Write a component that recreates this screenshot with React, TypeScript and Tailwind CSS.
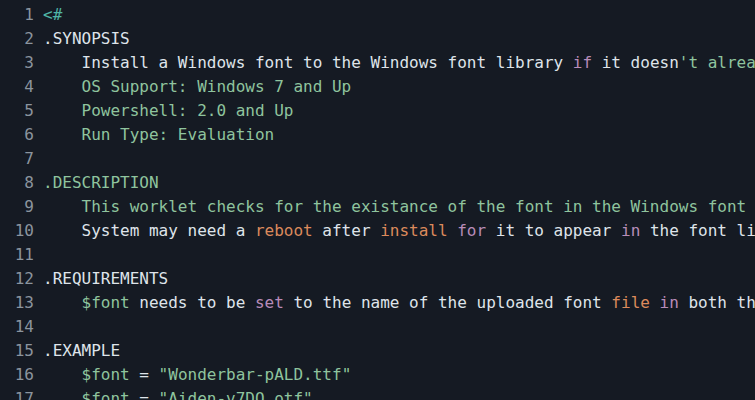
type Tok = [string, string?];

const W = "text-[#dfe4ea]";
const G = "text-[#8fc49e]";
const P = "text-[#b88cb9]";
const O = "text-[#dc8a5c]";
const T = "text-[#4fb5a6]";

const lines: Tok[][] = [
  [["<#", T]],
  [[".SYNOPSIS", W]],
  [
    ["    Install a Windows font to the Windows font library ", W],
    ["if", P],
    [" it doesn", W],
    ["'t already exist.", G],
  ],
  [["    OS Support: Windows 7 and Up", G]],
  [["    Powershell: 2.0 and Up", G]],
  [["    Run Type: Evaluation", G]],
  [],
  [[".DESCRIPTION", G]],
  [["    This worklet checks for the existance of the font in the Windows font library.", G]],
  [
    ["    System may need a ", W],
    ["reboot", O],
    [" after ", W],
    ["install", O],
    [" ", W],
    ["for", P],
    [" it to appear ", W],
    ["in", P],
    [" the font list.", W],
  ],
  [],
  [[".REQUIREMENTS", W]],
  [
    ["    ", W],
    ["$font", G],
    [" needs to be ", W],
    ["set", P],
    [" to the name of the uploaded font ", W],
    ["file", O],
    [" ", W],
    ["in", P],
    [" both the worklet and the font.", W],
  ],
  [],
  [[".EXAMPLE", W]],
  [
    ["    ", W],
    ["$font", G],
    [" = ", W],
    ['"Wonderbar-pALD.ttf"', G],
  ],
  [
    ["    ", W],
    ["$font", G],
    [" = ", W],
    ['"Aiden-v7DO.otf"', G],
  ],
];

export default function App() {
  return (
    <div className="h-[400px] w-[755px] overflow-hidden bg-[#151a23] pl-[14px] pt-[3px] font-['DejaVu_Sans_Mono',monospace] text-[16px] leading-[24px]">
      {lines.map((toks, i) => (
        <div key={i} className="flex h-[24px] whitespace-pre">
          <span className="w-[20px] shrink-0 text-right text-[#8b949e]">{i + 1}</span>
          <span className="ml-[9px]">
            {toks.map(([text, cls], j) => (
              <span key={j} className={cls}>
                {text}
              </span>
            ))}
          </span>
        </div>
      ))}
    </div>
  );
}
